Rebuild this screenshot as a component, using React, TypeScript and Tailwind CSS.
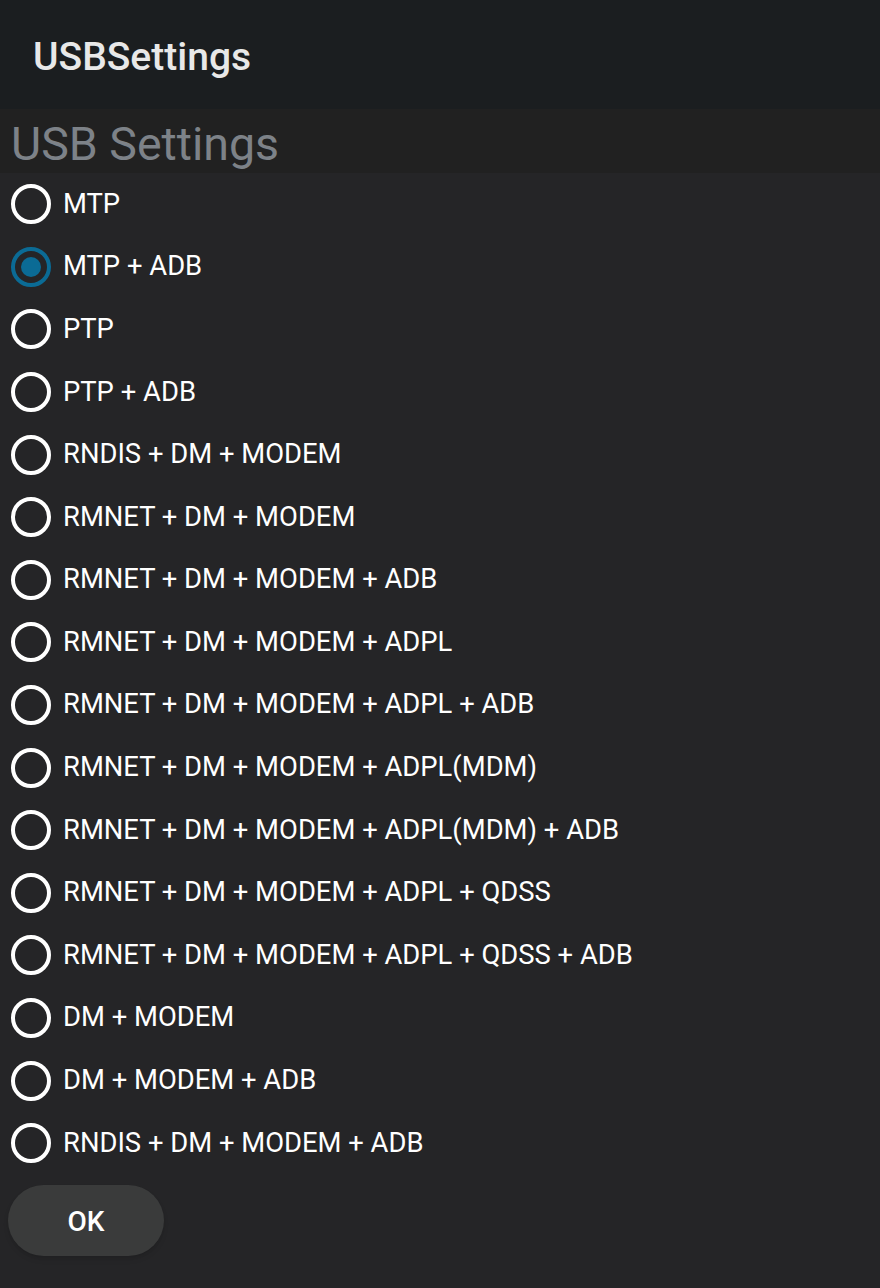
import { useState } from "react"

const options = [
  "MTP",
  "MTP + ADB",
  "PTP",
  "PTP + ADB",
  "RNDIS + DM + MODEM",
  "RMNET + DM + MODEM",
  "RMNET + DM + MODEM + ADB",
  "RMNET + DM + MODEM + ADPL",
  "RMNET + DM + MODEM + ADPL + ADB",
  "RMNET + DM + MODEM + ADPL(MDM)",
  "RMNET + DM + MODEM + ADPL(MDM) + ADB",
  "RMNET + DM + MODEM + ADPL + QDSS",
  "RMNET + DM + MODEM + ADPL + QDSS + ADB",
  "DM + MODEM",
  "DM + MODEM + ADB",
  "RNDIS + DM + MODEM + ADB",
]

function Radio({ checked }: { checked: boolean }) {
  return (
    <div
      className={
        checked
          ? "w-[40px] h-[40px] rounded-full border-[4px] border-[#0b6b95] flex items-center justify-center"
          : "w-[40px] h-[40px] rounded-full border-[4px] border-white"
      }
    >
      {checked && <div className="w-[20px] h-[20px] rounded-full bg-[#0b6b95]" />}
    </div>
  )
}

export default function App() {
  const [selected, setSelected] = useState(1)

  return (
    <div className="w-[880px] h-[1288px] bg-[#252527] flex flex-col font-['Roboto',sans-serif]">
      <div className="h-[109px] bg-[#1b1e20] flex items-center pl-[33px] pt-[6px]">
        <div className="text-[39px] font-medium text-[#e8e8e8] leading-none">USBSettings</div>
      </div>
      <div className="h-[64px] bg-[#212121] flex items-center pl-[11px] pt-[6px]">
        <div className="text-[46.5px] text-[#7d8288] leading-none">USB Settings</div>
      </div>
      <div className="flex flex-col">
        {options.map((opt, i) => (
          <div
            key={opt}
            className="h-[62.6px] flex items-center pl-[11px] gap-[12px] cursor-pointer"
            onClick={() => setSelected(i)}
          >
            <Radio checked={selected === i} />
            <div className="text-[27.4px] text-white">{opt}</div>
          </div>
        ))}
      </div>
      <div className="pl-[8px] pt-[10px]">
        <button className="w-[156px] h-[71px] rounded-full bg-[#3a3b3b] text-white text-[28px] font-medium shadow-md pt-[3px]">
          OK
        </button>
      </div>
    </div>
  )
}
